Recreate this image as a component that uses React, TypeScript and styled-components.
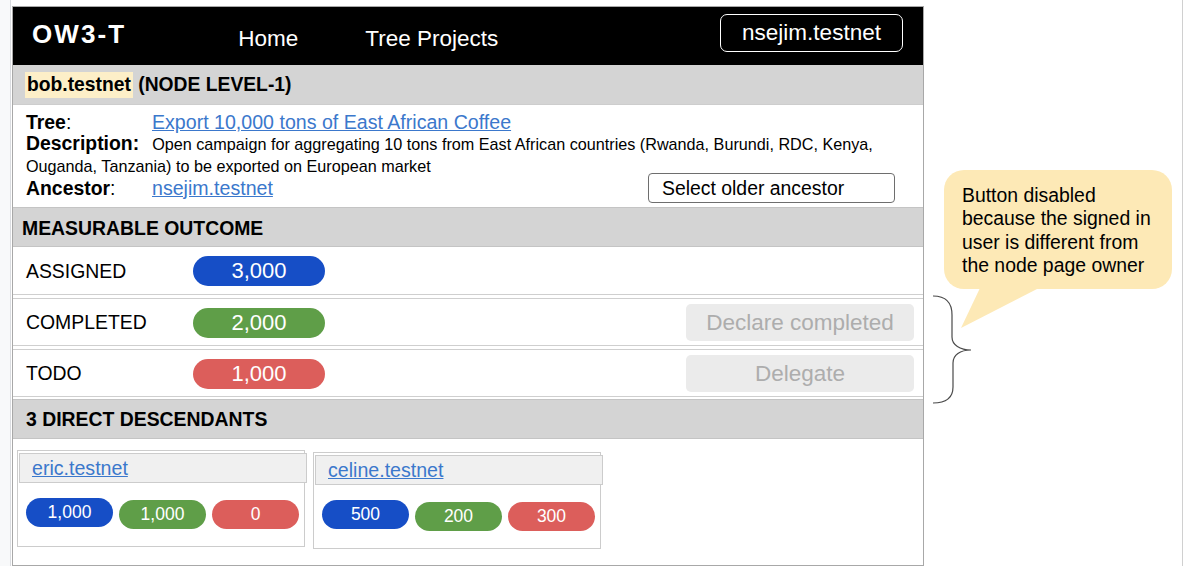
import React from 'react';
import styled, { createGlobalStyle } from 'styled-components';

const GlobalStyle = createGlobalStyle`
  html, body { margin: 0; padding: 0; background: #fff; }
  body { font-family: "Liberation Sans", Arial, sans-serif; color: #000; }
  * { box-sizing: border-box; }
`;

const FONT = `"Liberation Sans", Arial, sans-serif`;

const Page = styled.div`
  display: flex;
  width: 1184px;
  height: 566px;
  overflow: hidden;
  background: #fff;
`;

const Gutter = styled.div`
  width: 11px;
  flex: none;
  background: #f8f9fa;
  border-right: 1px solid #dadce0;
`;

const Canvas = styled.div`
  width: 1172px;
  flex: none;
  display: flex;
  align-items: flex-start;
  padding: 6px 0 0 1px;
  border-right: 1px solid #d0d0d0;
`;

const Frame = styled.main`
  width: 912px;
  height: 560px;
  flex: none;
  display: flex;
  flex-direction: column;
  border: 1px solid #a8a8a8;
  background: #fff;
`;

const Header = styled.header`
  height: 58px;
  flex: none;
  background: #000;
  color: #fff;
  display: flex;
  align-items: center;
  padding: 0 20px 0 19px;
`;

const Logo = styled.div`
  font-weight: 700;
  font-size: 26px;
  letter-spacing: 2.1px;
  margin-top: -4px;
`;

const Nav = styled.nav`
  display: flex;
  gap: 67px;
  margin-left: 112px;
  margin-top: 5px;
`;

const NavItem = styled.span`
  font-size: 22.5px;
`;

const Account = styled.button`
  margin-left: auto;
  margin-top: -6px;
  width: 183px;
  height: 38px;
  padding: 0;
  border: 1px solid #fff;
  border-radius: 7px;
  background: #000;
  color: #fff;
  font: 22.5px ${FONT};
`;

const TitleBar = styled.div`
  height: 39px;
  flex: none;
  background: #d4d4d4;
  display: flex;
  align-items: center;
  padding-left: 12px;
  font-weight: 700;
  font-size: 19.3px;
  white-space: pre;
`;

const Highlight = styled.span`
  background: #fdefc8;
  padding: 2px;
`;

const Info = styled.section`
  height: 103px;
  flex: none;
  padding: 6px 28px 0 13px;
  border-top: 1px solid #cdcdcd;
`;

const InfoLine = styled.div`
  display: flex;
  align-items: center;
  height: 22px;
`;

const Label = styled.span`
  display: inline-block;
  width: 126px;
  flex: none;
  font-size: 19.4px;
`;

const Strong = styled.b`
  font-weight: 700;
`;

const Link = styled.a<{ $size?: number }>`
  color: #3b78cc;
  text-decoration: underline;
  font-size: ${(p) => p.$size ?? 19.6}px;
`;

const Desc = styled.p`
  margin: 0;
  font-size: 16.2px;
  line-height: 22px;
`;

const DescLabel = styled.b`
  display: inline-block;
  font-weight: 700;
  font-size: 19.4px;
  line-height: 20px;
  margin-right: 13px;
`;

const SelectButton = styled.button`
  margin-left: auto;
  width: 247px;
  height: 30px;
  padding: 0 0 0 13px;
  text-align: left;
  background: #fff;
  border: 1px solid #6e6e6e;
  border-radius: 4px;
  font: 19.4px ${FONT};
  color: #000;
`;

const SectionBar = styled.div<{ $indent: number; $pt: number }>`
  height: 40px;
  flex: none;
  display: flex;
  align-items: center;
  padding: ${(p) => p.$pt}px 0 0 ${(p) => p.$indent}px;
  background: #d4d4d4;
  border-top: 1px solid #c4c4c4;
  border-bottom: 1px solid #c4c4c4;
  font-weight: 700;
  font-size: 19.4px;
`;

const RowList = styled.div`
  display: flex;
  flex-direction: column;
  gap: 3px;
  padding: 0 0 2px;
`;

const Row = styled.div`
  height: 48px;
  display: flex;
  align-items: center;
  padding: 1px 9px 0 13px;
  border-top: 1px solid #cfcfcf;
  border-bottom: 1px solid #cfcfcf;
  &:first-child { border-top: none; }
`;

const RowLabel = styled.span`
  width: 167px;
  font-size: 19.4px;
`;

const Pill = styled.span<{ $color: string; $w: number; $h: number; $size: number }>`
  display: inline-flex;
  align-items: center;
  justify-content: center;
  width: ${(p) => p.$w}px;
  height: ${(p) => p.$h}px;
  border-radius: ${(p) => p.$h / 2}px;
  background: ${(p) => p.$color};
  color: #fff;
  font-size: ${(p) => p.$size}px;
  flex: none;
`;

const ActionButton = styled.button`
  margin-left: auto;
  width: 228px;
  height: 37px;
  border: none;
  border-radius: 5px;
  background: #ebebeb;
  color: #adadad;
  font: 22.5px ${FONT};
  padding: 0;
`;

const Descendants = styled.div`
  flex: 1;
  display: flex;
  align-items: flex-start;
  gap: 8px;
  padding: 11px 0 0 4px;
`;

const Card = styled.div<{ $dy: number }>`
  width: 288px;
  height: 97px;
  margin-top: ${(p) => p.$dy}px;
  border: 1px solid #cccccc;
  display: flex;
  flex-direction: column;
`;

const CardHead = styled.div`
  height: 30px;
  margin: 2px -3px 0 1px;
  background: #f0f0f0;
  border: 1px solid #cccccc;
  display: flex;
  align-items: center;
  padding-left: 12px;
`;

const CardPills = styled.div`
  display: flex;
  align-items: flex-start;
  gap: 6px;
  padding: 15px 0 0 8px;
`;

const Annotation = styled.aside`
  display: flex;
  flex-direction: column;
  margin: 164px 0 0 8px;
`;

const Bubble = styled.div`
  position: relative;
  width: 228px;
  height: 119px;
  margin-left: 12px;
  padding: 14px 0 0 18px;
  border-radius: 20px;
  background: #fde9b6;
  font-size: 19.4px;
  line-height: 23.3px;
  &::after {
    content: '';
    position: absolute;
    left: 17px;
    top: 118px;
    width: 78px;
    height: 40px;
    background: #fde9b6;
    clip-path: polygon(19px 0, 78px 0, 0 40px);
  }
`;

const Brace = styled.svg`
  margin-top: 6px;
  display: block;
`;

const pillColors = { blue: '#164ec6', green: '#5f9e48', red: '#dc5e5b' };

const outcomes = [
  { label: 'ASSIGNED', value: '3,000', color: pillColors.blue, action: '' },
  { label: 'COMPLETED', value: '2,000', color: pillColors.green, action: 'Declare completed' },
  { label: 'TODO', value: '1,000', color: pillColors.red, action: 'Delegate' },
];

const children = [
  { name: 'eric.testnet', values: ['1,000', '1,000', '0'], dy: 0 },
  { name: 'celine.testnet', values: ['500', '200', '300'], dy: 2 },
];

export default function App() {
  return (
    <>
      <GlobalStyle />
      <Page>
        <Gutter />
        <Canvas>
          <Frame>
            <Header>
              <Logo>OW3-T</Logo>
              <Nav>
                <NavItem>Home</NavItem>
                <NavItem>Tree Projects</NavItem>
              </Nav>
              <Account>nsejim.testnet</Account>
            </Header>
            <TitleBar>
              <Highlight>bob.testnet</Highlight> (NODE LEVEL-1)
            </TitleBar>
            <Info>
              <InfoLine>
                <Label>
                  <Strong>Tree</Strong>:
                </Label>
                <Link href="#">Export 10,000 tons of East African Coffee</Link>
              </InfoLine>
              <Desc>
                <DescLabel>Description:</DescLabel>
                <span>Open campaign for aggregating 10 tons from East African countries (Rwanda, Burundi, RDC, Kenya,</span>{' '}
                <span>Ouganda, Tanzania) to be exported on European market</span>
              </Desc>
              <InfoLine>
                <Label>
                  <Strong>Ancestor</Strong>:
                </Label>
                <Link href="#">nsejim.testnet</Link>
                <SelectButton>Select older ancestor</SelectButton>
              </InfoLine>
            </Info>
            <SectionBar $indent={9} $pt={2}>MEASURABLE OUTCOME</SectionBar>
            <RowList>
              {outcomes.map((o) => (
                <Row key={o.label}>
                  <RowLabel>{o.label}</RowLabel>
                  <Pill $color={o.color} $w={132} $h={30} $size={22}>
                    {o.value}
                  </Pill>
                  {o.action && <ActionButton disabled>{o.action}</ActionButton>}
                </Row>
              ))}
            </RowList>
            <SectionBar $indent={13} $pt={0}>3 DIRECT DESCENDANTS</SectionBar>
            <Descendants>
              {children.map((c) => (
                <Card key={c.name} $dy={c.dy}>
                  <CardHead>
                    <Link href="#">{c.name}</Link>
                  </CardHead>
                  <CardPills>
                    {c.values.map((v, i) => (
                      <Pill
                        key={i}
                        $color={[pillColors.blue, pillColors.green, pillColors.red][i]}
                        $w={87}
                        $h={29}
                        $size={17.5}
                        style={{ marginTop: i === 0 ? 0 : 2 }}
                      >
                        {v}
                      </Pill>
                    ))}
                  </CardPills>
                </Card>
              ))}
            </Descendants>
          </Frame>
          <Annotation>
            <Bubble>
              Button disabled
              <br />
              because the signed in
              <br />
              user is different from
              <br />
              the node page owner
            </Bubble>
            <Brace width="42" height="110" viewBox="0 0 42 110">
              <path
                d="M1 1 C12 1 20 6 20 20 L20 42 C20 50 28 55 39 55 C28 55 21 60 21 68 L21 92 C21 103 13 108 1 108"
                fill="none"
                stroke="#4a4a4a"
                strokeWidth="1.2"
              />
            </Brace>
          </Annotation>
        </Canvas>
      </Page>
    </>
  );
}
